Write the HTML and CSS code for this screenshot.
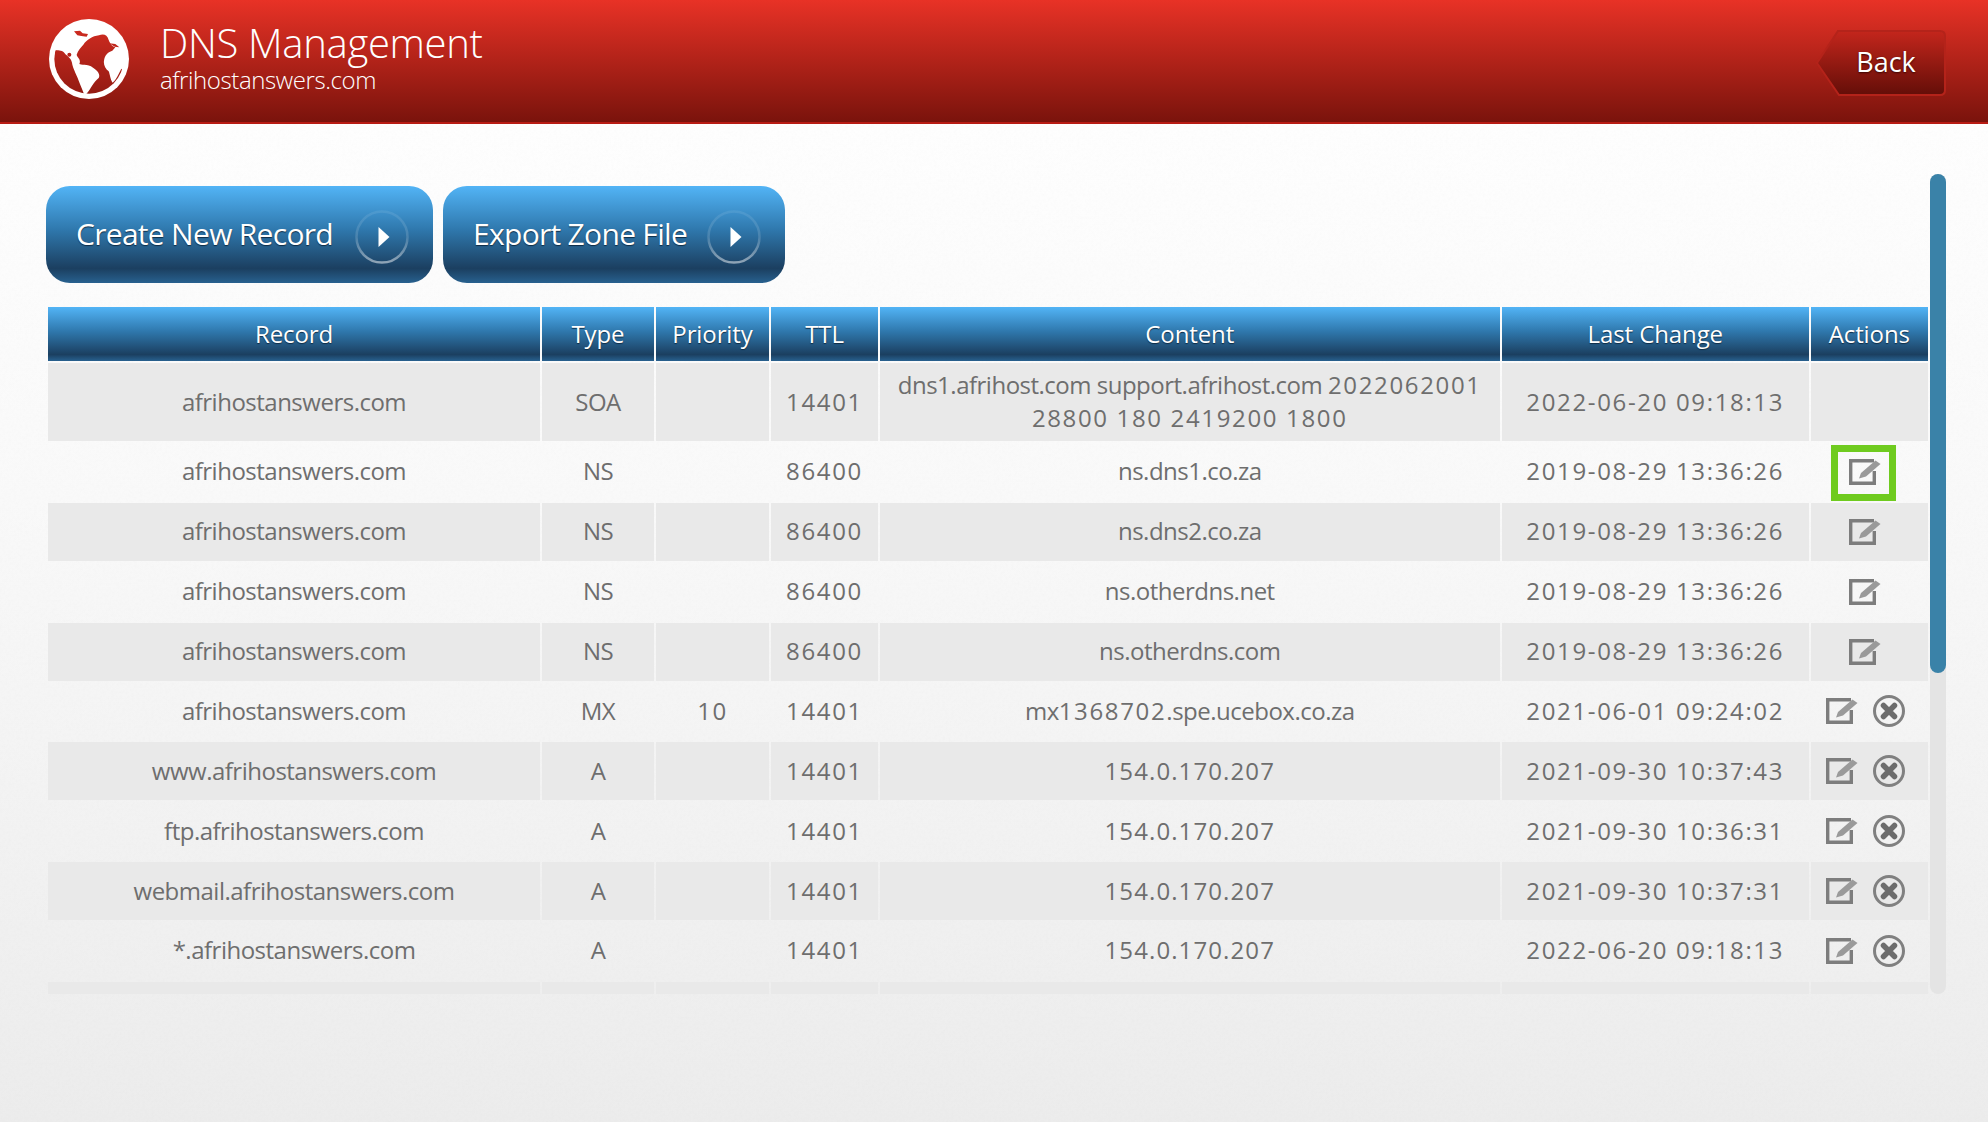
FILE: index.html
```html
<!DOCTYPE html>
<html lang="en">
<head>
    <meta charset="UTF-8">
    <title>DNS Management</title>
    <link rel="stylesheet" href="styles.css">
</head>
<body>
    <svg class="icon-defs" width="0" height="0">
        <defs>
            <linearGradient id="ringFade" x1="0" y1="0" x2="0" y2="1">
                <stop offset="0" stop-color="#fff" stop-opacity="0.08"/>
                <stop offset="0.5" stop-color="#fff" stop-opacity="0.15"/>
                <stop offset="1" stop-color="#fff" stop-opacity="0.5"/>
            </linearGradient>
            <linearGradient id="backFill" x1="0" y1="0" x2="0" y2="1">
                <stop offset="0" stop-color="#c4261c"/>
                <stop offset="1" stop-color="#640e08"/>
            </linearGradient>
            <symbol id="icon-arrow" viewBox="0 0 56 56">
                <circle cx="28" cy="28" r="25.5" fill="none" stroke="url(#ringFade)" stroke-width="2.5"/>
                <path d="M24.5 18 L35.5 28 L24.5 38 Z" fill="#fff"/>
            </symbol>
            <symbol id="icon-edit" viewBox="0 0 32 26">
                <path d="M25 1.7 H1.7 V24.3 H25.3 V12" fill="none" stroke="#7d7d7d" stroke-width="3.4"/>
                <path d="M10 19.5 L12 14 L26.5 1.5 L31.5 5 L17 17.5 Z" fill="#9a9a9a"/>
            </symbol>
            <symbol id="icon-delete" viewBox="0 0 32 32">
                <circle cx="16" cy="16" r="14.5" fill="none" stroke="#808080" stroke-width="3"/>
                <path d="M10.5 10.5 L21.5 21.5 M21.5 10.5 L10.5 21.5" stroke="#6c6c6c" stroke-width="5.5" stroke-linecap="round"/>
            </symbol>
            <mask id="globeMask">
                <circle cx="135" cy="135" r="120" fill="#fff"/>
                <g clip-path="url(#globeInner)" fill="#000">
                    <path d="M34 108 C46 110 56 108 62 118 C70 128 80 130 84 146 C86 160 92 170 100 190 C106 205 114 225 124 250 L60 250 L15 180 Z"/>
                    <path d="M118 92 C128 78 145 66 165 64 C178 58 190 62 194 78 C200 92 206 98 214 100 L205 110 C190 115 182 125 180 140 C178 152 184 165 194 172 C198 180 198 195 206 206 C216 198 224 180 232 164 L250 180 L220 260 L110 260 L130 236 C140 225 148 205 164 192 C170 180 160 170 145 160 C135 150 120 155 106 150 C112 135 100 132 98 122 C102 108 110 102 118 92 Z"/>
                    <path d="M90 52 L108 50 L116 58 L132 60 L128 68 L112 66 L100 64 Z"/>
                    <path d="M196 88 L214 90 L226 100 L212 98 Z"/>
                    <circle cx="76" cy="122" r="6"/>
                </g>
            </mask>
            <clipPath id="globeInner">
                <circle cx="135" cy="135" r="104"/>
            </clipPath>
        </defs>
    </svg>

    <header class="top-bar">
        <svg class="globe" viewBox="0 0 270 270">
            <rect width="270" height="270" fill="#fff" mask="url(#globeMask)"/>
        </svg>
        <div class="top-title">
            <h1>DNS Management</h1>
            <p>afrihostanswers.com</p>
        </div>
        <a class="back-btn">
            <svg class="back-shape" viewBox="0 0 130 66">
                <path d="M22 1 H124 Q129 1 129 6 V60 Q129 65 124 65 H23 L1 33 Z" fill="url(#backFill)" stroke="#b4231a" stroke-width="2"/>
            </svg>
            <span>Back</span>
        </a>
    </header>

    <main class="page">
        <div class="scroll-area">
            <div class="btn-row">
                <a class="big-btn btn-create">Create New Record <svg class="btn-arrow"><use href="#icon-arrow"/></svg></a>
                <a class="big-btn btn-export">Export Zone File <svg class="btn-arrow"><use href="#icon-arrow"/></svg></a>
            </div>
            <table class="dns-table">
                <colgroup>
                    <col class="c-record"><col class="c-type"><col class="c-priority"><col class="c-ttl"><col class="c-content"><col class="c-change"><col class="c-actions">
                </colgroup>
                <thead>
                    <tr><th>Record</th><th>Type</th><th>Priority</th><th>TTL</th><th>Content</th><th>Last Change</th><th>Actions</th></tr>
                </thead>
                <tbody>
                    <tr class="soa">
                        <td>afrihostanswers.com</td><td>SOA</td><td></td><td class="num">14401</td>
                        <td>dns1.afrihost.com support.afrihost.com <span class="num">2022062001</span> <span class="num">28800 180 2419200 1800</span></td>
                        <td class="num">2022-06-20 09:18:13</td><td></td>
                    </tr>
                    <tr>
                        <td>afrihostanswers.com</td><td>NS</td><td></td><td class="num">86400</td><td>ns.dns1.co.za</td><td class="num">2019-08-29 13:36:26</td>
                        <td><span class="actions"><span class="highlight"><svg class="i-edit"><use href="#icon-edit"/></svg></span></span></td>
                    </tr>
                    <tr>
                        <td>afrihostanswers.com</td><td>NS</td><td></td><td class="num">86400</td><td>ns.dns2.co.za</td><td class="num">2019-08-29 13:36:26</td>
                        <td><span class="actions"><svg class="i-edit"><use href="#icon-edit"/></svg></span></td>
                    </tr>
                    <tr>
                        <td>afrihostanswers.com</td><td>NS</td><td></td><td class="num">86400</td><td>ns.otherdns.net</td><td class="num">2019-08-29 13:36:26</td>
                        <td><span class="actions"><svg class="i-edit"><use href="#icon-edit"/></svg></span></td>
                    </tr>
                    <tr>
                        <td>afrihostanswers.com</td><td>NS</td><td></td><td class="num">86400</td><td>ns.otherdns.com</td><td class="num">2019-08-29 13:36:26</td>
                        <td><span class="actions"><svg class="i-edit"><use href="#icon-edit"/></svg></span></td>
                    </tr>
                    <tr>
                        <td>afrihostanswers.com</td><td>MX</td><td class="num">10</td><td class="num">14401</td><td>mx<span class="num">1368702</span>.spe.ucebox.co.za</td><td class="num">2021-06-01 09:24:02</td>
                        <td><span class="actions"><svg class="i-edit"><use href="#icon-edit"/></svg><svg class="i-delete"><use href="#icon-delete"/></svg></span></td>
                    </tr>
                    <tr>
                        <td>www.afrihostanswers.com</td><td>A</td><td></td><td class="num">14401</td><td class="ip">154.0.170.207</td><td class="num">2021-09-30 10:37:43</td>
                        <td><span class="actions"><svg class="i-edit"><use href="#icon-edit"/></svg><svg class="i-delete"><use href="#icon-delete"/></svg></span></td>
                    </tr>
                    <tr>
                        <td>ftp.afrihostanswers.com</td><td>A</td><td></td><td class="num">14401</td><td class="ip">154.0.170.207</td><td class="num">2021-09-30 10:36:31</td>
                        <td><span class="actions"><svg class="i-edit"><use href="#icon-edit"/></svg><svg class="i-delete"><use href="#icon-delete"/></svg></span></td>
                    </tr>
                    <tr>
                        <td>webmail.afrihostanswers.com</td><td>A</td><td></td><td class="num">14401</td><td class="ip">154.0.170.207</td><td class="num">2021-09-30 10:37:31</td>
                        <td><span class="actions"><svg class="i-edit"><use href="#icon-edit"/></svg><svg class="i-delete"><use href="#icon-delete"/></svg></span></td>
                    </tr>
                    <tr>
                        <td>*.afrihostanswers.com</td><td>A</td><td></td><td class="num">14401</td><td class="ip">154.0.170.207</td><td class="num">2022-06-20 09:18:13</td>
                        <td><span class="actions"><svg class="i-edit"><use href="#icon-edit"/></svg><svg class="i-delete"><use href="#icon-delete"/></svg></span></td>
                    </tr>
                    <tr>
                        <td></td><td></td><td></td><td></td><td></td><td></td><td></td>
                    </tr>
                </tbody>
            </table>
        </div>
        <div class="scrollbar"><div class="scroll-thumb"></div></div>
    </main>
</body>
</html>
```

FILE: styles.css
```css
html, body {
    height: 100%;
}
body {
    margin: 0;
    font-family: "Open Sans", "Noto Sans", sans-serif;
    color: #6e6e6e;
    background-color: #f6f6f6;
    background-image:
        url("data:image/svg+xml,%3Csvg xmlns='http://www.w3.org/2000/svg' width='400' height='400'%3E%3Cfilter id='n'%3E%3CfeTurbulence type='fractalNoise' baseFrequency='0.35' numOctaves='3' stitchTiles='stitch'/%3E%3CfeColorMatrix values='0 0 0 0 0.5 0 0 0 0 0.5 0 0 0 0 0.5 0.6 0 0 0 -0.22'/%3E%3C/filter%3E%3Crect width='400' height='400' filter='url(%23n)' opacity='0.1'/%3E%3C/svg%3E"),
        linear-gradient(to bottom, #fefefe 124px, #f9f9f9 500px, #ececec 1122px);
    overflow: hidden;
}
.icon-defs {
    position: absolute;
}

/* red bar */
.top-bar {
    height: 124px;
    box-sizing: border-box;
    display: flex;
    align-items: flex-start;
    padding: 14px 42px 0 44px;
    background: linear-gradient(to bottom, #e83226, #7a130c);
    border-bottom: 2px solid #b81c14;
    color: #fff;
}
.globe {
    width: 90px;
    height: 90px;
    flex: none;
}
.top-title {
    margin-left: 26px;
    padding-top: 6px;
    flex: 1;
}
.top-title h1 {
    margin: 0;
    font-size: 40px;
    font-weight: 300;
    line-height: 46px;
    letter-spacing: -0.3px;
}
.top-title p {
    margin: 0;
    font-size: 24px;
    font-weight: 300;
    line-height: 28px;
    letter-spacing: -0.4px;
}
.back-btn {
    position: relative;
    width: 130px;
    height: 66px;
    margin-top: 16px;
    display: flex;
    align-items: center;
    justify-content: center;
    padding: 0 2px 4px 12px;
    box-sizing: border-box;
    font-size: 27px;
    text-shadow: 0 1px 2px #3a0703;
}
.back-shape {
    position: absolute;
    left: 0;
    top: 0;
    width: 130px;
    height: 66px;
}
.back-btn span {
    position: relative;
}

/* page body */
.page {
    display: flex;
    align-items: flex-start;
    padding: 50px 0 0 46px;
}
.scroll-area {
    width: 1884px;
    height: 820px;
    padding-top: 12px;
    box-sizing: border-box;
    overflow: hidden;
}
.scrollbar {
    width: 16px;
    height: 820px;
    border-radius: 8px;
    background: #e4e4e4;
}
.scroll-thumb {
    height: 499px;
    border-radius: 8px;
    background: #3a82a8;
}

/* big blue buttons */
.btn-row {
    display: flex;
    gap: 10px;
    margin-bottom: 24px;
}
.big-btn {
    height: 97px;
    box-sizing: border-box;
    display: flex;
    align-items: center;
    justify-content: space-between;
    padding: 0 23px 2px 30px;
    border-radius: 24px;
    color: #fff;
    font-size: 30px;
    letter-spacing: -0.7px;
    text-shadow: 0 1px 1px #0f2c45;
    background: linear-gradient(to bottom, #52b4f6 0%, #2f78ad 45%, #1b3f60 85%, #28618f 100%);
}
.btn-create {
    width: 387px;
}
.btn-export {
    width: 342px;
}
.btn-arrow {
    width: 56px;
    height: 56px;
    flex: none;
    position: relative;
    top: 3px;
}

/* table */
.dns-table {
    table-layout: fixed;
    width: 1883px;
    border-collapse: separate;
    border-spacing: 2px 0;
    font-size: 24px;
    letter-spacing: -0.5px;
    text-align: center;
}
.c-record { width: 492px; }
.c-type { width: 112px; }
.c-priority { width: 113px; }
.c-ttl { width: 107px; }
.c-content { width: 619.5px; }
.c-change { width: 307.5px; }
.c-actions { width: 116.5px; }
.dns-table th {
    height: 55px;
    padding: 0 0 2px;
    box-sizing: border-box;
    border-bottom: 1px solid transparent;
    background: linear-gradient(to bottom, #52b4f6 0%, #2f78ad 45%, #1b3f60 88%, #28618f 100%) padding-box;
    color: #fff;
    font-weight: 400;
    letter-spacing: -0.1px;
    text-shadow: 0 1px 1px #0f2c45;
}
.dns-table td {
    height: 59.88px;
    padding: 0 12px 2px;
    box-sizing: border-box;
    border-top: 1px solid transparent;
    border-bottom: 1px solid transparent;
    background-clip: padding-box;
    line-height: 33px;
}
.dns-table tr.soa td {
    height: 80px;
}
.dns-table tbody tr:nth-child(odd) td {
    background-color: #e9e9e9;
}
.dns-table .num {
    letter-spacing: 1.65px;
}
.dns-table .ip {
    letter-spacing: 1.1px;
}
.actions {
    display: flex;
    align-items: center;
    justify-content: center;
    gap: 15px;
    margin: 2px 8px 0 0;
}
.i-edit {
    width: 32px;
    height: 26px;
    flex: none;
    display: block;
    filter: blur(0.4px);
}
.i-delete {
    width: 32px;
    height: 32px;
    flex: none;
    display: block;
    filter: blur(0.4px);
}
.highlight {
    position: relative;
    display: block;
}
.highlight::after {
    content: "";
    position: absolute;
    left: -18px;
    right: -15px;
    top: -14px;
    bottom: -16px;
    border: 7px solid #6fcb1f;
}
```
